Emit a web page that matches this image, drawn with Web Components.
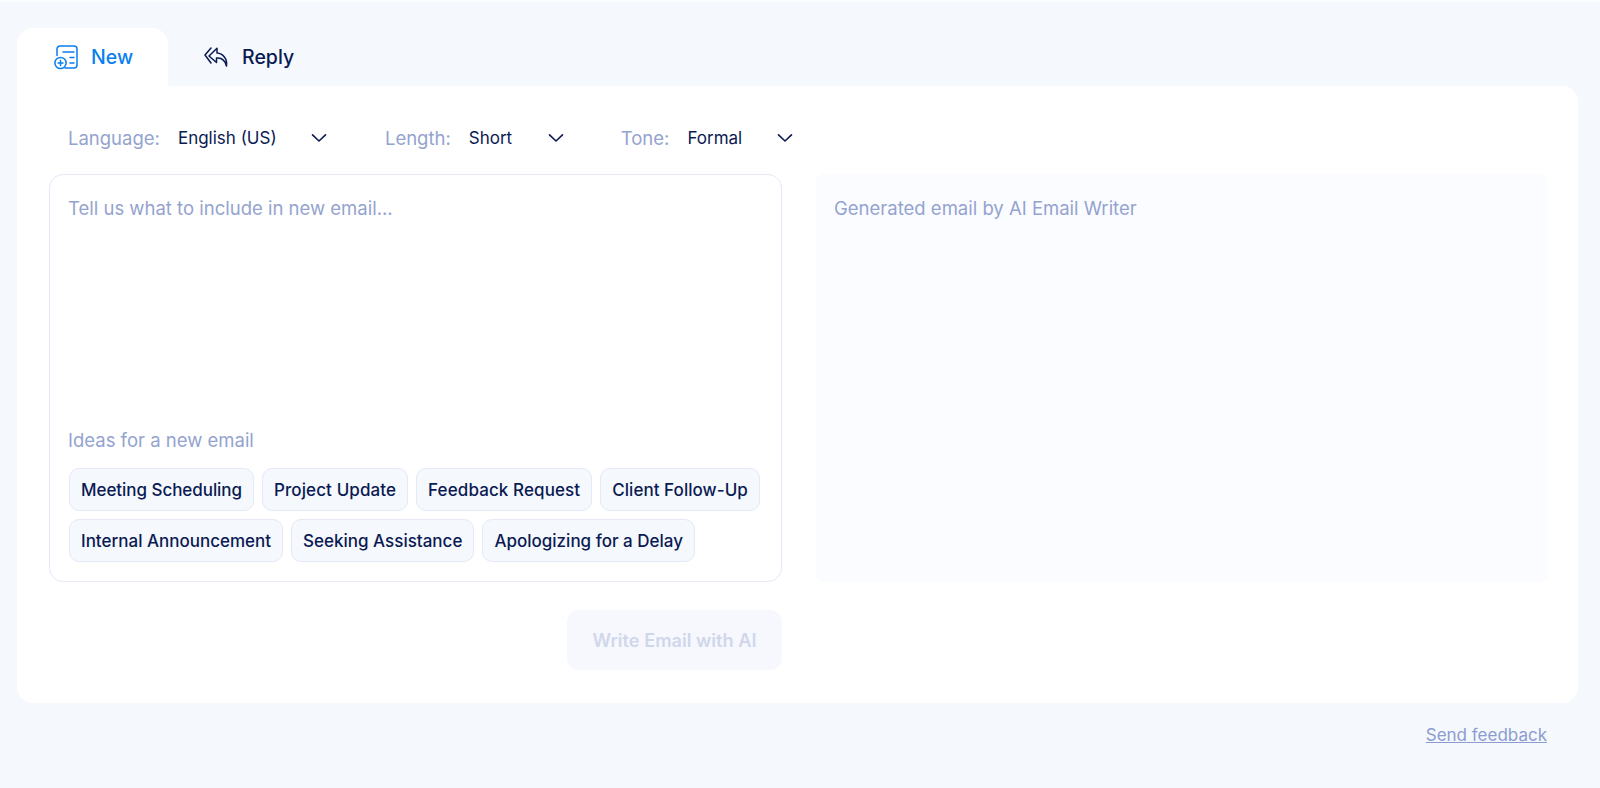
<!DOCTYPE html>
<html lang="en">

<head>
  <meta charset="UTF-8">
  <title>AI Email Writer</title>
  <style>
    html, body { margin: 0; height: 100%; }
    body {
      background: #f5f8fd;
      font-family: Inter, "Liberation Sans", sans-serif;
      color: #0a1a52;
    }
  </style>
  <script>
    class TabItem extends HTMLElement {
      constructor() {
        super();
        this.attachShadow({ mode: 'open' });
        this.shadowRoot.innerHTML = `
          <style>
            :host {
              display: flex;
              align-items: center;
              gap: 13px;
              height: 58px;
              box-sizing: border-box;
              padding: 0 35px 0 36px;
              border-radius: 16px 16px 0 0;
              font-size: 19.5px;
              font-weight: 500;
              color: #0a1a52;
            }
            :host([active]) { background: #fff; color: #0a7fee; }
            ::slotted(svg) { display: block; flex: none; }
          </style>
          <slot name="icon"></slot>
          <slot></slot>
        `;
      }
    }

    class OptionSelect extends HTMLElement {
      constructor() {
        super();
        this.attachShadow({ mode: 'open' });
        this.shadowRoot.innerHTML = `
          <style>
            :host {
              display: flex;
              align-items: center;
              font-size: 17px;
            }
            .label { color: #94a3cf; font-size: 18.5px; margin-right: 18px; }
            .value { width: var(--value-width, 100px); color: #0a1a52; }
            svg { display: block; }
          </style>
          <span class="label"></span>
          <span class="value"></span>
          <svg width="16" height="16" viewBox="0 0 16 16" fill="none" stroke="#0a1a52" stroke-width="1.6" stroke-linecap="round" stroke-linejoin="round"><path d="M1.5 4.8 8 11l6.5-6.2"/></svg>
        `;
      }

      connectedCallback() {
        this.shadowRoot.querySelector('.label').textContent = this.getAttribute('label');
        this.shadowRoot.querySelector('.value').textContent = this.getAttribute('value');
      }
    }

    class IdeaChip extends HTMLElement {
      constructor() {
        super();
        this.attachShadow({ mode: 'open' });
        this.shadowRoot.innerHTML = `
          <style>
            :host {
              display: flex;
              align-items: center;
              height: 43px;
              box-sizing: border-box;
              padding: 0 11px;
              background: #f5f8fd;
              border: 1px solid #e5e9f7;
              border-radius: 10px;
              font-size: 17px;
              font-weight: 500;
              color: #0a1a52;
              white-space: nowrap;
            }
          </style>
          <slot></slot>
        `;
      }
    }

    class PromptBox extends HTMLElement {
      constructor() {
        super();
        this.attachShadow({ mode: 'open' });
        this.shadowRoot.innerHTML = `
          <style>
            :host {
              display: flex;
              flex-direction: column;
              height: 408px;
              box-sizing: border-box;
              padding: 20px 10px 19px 19px;
              background: #fff;
              border: 1px solid #e5e9f7;
              border-radius: 14px;
              font-size: 18.5px;
              color: #94a3cf;
            }
            .placeholder { line-height: 26px; flex: 1; margin-left: -1px; }
            .ideas-title { line-height: 26px; margin: 0 0 15px -1px; }
            .chips { display: flex; flex-wrap: wrap; gap: 8px; }
          </style>
          <div class="placeholder">Tell us what to include in new email...</div>
          <div class="ideas-title">Ideas for a new email</div>
          <div class="chips"><slot></slot></div>
        `;
      }
    }

    class ResultBox extends HTMLElement {
      constructor() {
        super();
        this.attachShadow({ mode: 'open' });
        this.shadowRoot.innerHTML = `
          <style>
            :host {
              display: block;
              height: 408px;
              box-sizing: border-box;
              padding: 21px 18px;
              background: #fbfcff;
              border-radius: 8px;
              font-size: 18.5px;
              line-height: 26px;
              color: #94a3cf;
            }
          </style>
          <slot></slot>
        `;
      }
    }

    class WriteButton extends HTMLElement {
      constructor() {
        super();
        this.attachShadow({ mode: 'open' });
        this.shadowRoot.innerHTML = `
          <style>
            :host {
              display: flex;
              align-items: center;
              justify-content: center;
              width: 215px;
              height: 60px;
              background: #f6f8fe;
              border-radius: 12px;
              font-size: 18.2px;
              font-weight: 600;
              color: #d0d7ea;
            }
          </style>
          <slot></slot>
        `;
      }
    }

    class WriterCard extends HTMLElement {
      constructor() {
        super();
        this.attachShadow({ mode: 'open' });
        this.shadowRoot.innerHTML = `
          <style>
            :host {
              display: block;
              height: 617px;
              box-sizing: border-box;
              padding: 0 30px 0 32px;
              background: #fff;
              border-radius: 0 16px 16px 16px;
            }
            .options {
              display: flex;
              align-items: center;
              gap: 58px;
              height: 72px;
              padding: 16px 0 0 19px;
            }
            .panes { display: grid; grid-template-columns: 733px 732px; column-gap: 34px; }
            .actions { display: flex; justify-content: flex-end; width: 733px; margin-top: 28px; }
          </style>
          <div class="options"><slot name="options"></slot></div>
          <div class="panes"><slot name="prompt"></slot><slot name="result"></slot></div>
          <div class="actions"><slot name="action"></slot></div>
        `;
      }
    }

    class WriterPage extends HTMLElement {
      constructor() {
        super();
        this.attachShadow({ mode: 'open' });
        this.shadowRoot.innerHTML = `
          <style>
            :host {
              display: block;
              height: 788px;
              box-sizing: border-box;
              padding: 26px 22px 0 17px;
              border-top: 2px solid #fbfcfe;
            }
            .tabs { display: flex; }
            .footer { display: flex; justify-content: flex-end; padding: 21px 31px 0 0; }
            a {
              font-size: 17px;
              line-height: 22px;
              color: #8c9cd0;
              text-decoration: underline;
            }
          </style>
          <div class="tabs"><slot name="tabs"></slot></div>
          <slot></slot>
          <div class="footer"><a href="#">Send feedback</a></div>
        `;
      }
    }

    customElements.define('tab-item', TabItem);
    customElements.define('option-select', OptionSelect);
    customElements.define('idea-chip', IdeaChip);
    customElements.define('prompt-box', PromptBox);
    customElements.define('result-box', ResultBox);
    customElements.define('write-button', WriteButton);
    customElements.define('writer-card', WriterCard);
    customElements.define('writer-page', WriterPage);
  </script>
</head>

<body>
  <writer-page>
    <tab-item slot="tabs" active>
      <svg slot="icon" width="25" height="25" viewBox="0 0 25 25" fill="none" stroke="#0a7fee" stroke-width="1.5" stroke-linecap="round" stroke-linejoin="round">
        <path d="M4 10.500V4A3 3 0 0 1 7 1h14a3 3 0 0 1 3 3v16a3 3 0 0 1-3 3h-9"/>
        <path d="M10 7h11M17 12.500h4M17 18h4"/>
        <circle cx="7.500" cy="18" r="5.600"/>
        <path d="M7.500 15.500v5M5 18h5"/>
      </svg>
      New
    </tab-item>
    <tab-item slot="tabs">
      <svg slot="icon" width="25" height="21" viewBox="0 0 25 21" fill="none" stroke="#0a1a52" stroke-width="1.5" stroke-linecap="round" stroke-linejoin="round">
        <path d="M7 1 1 8l6 8"/>
        <path d="M13 1.300 5 9l7.500 6.500V11c4.500-.5 8.500 2 10 8 1-7-3.500-12.500-9.500-13z"/>
      </svg>
      Reply
    </tab-item>

    <writer-card>
      <option-select slot="options" label="Language:" value="English (US)" style="--value-width: 133px"></option-select>
      <option-select slot="options" label="Length:" value="Short" style="--value-width: 79px; margin-right: -1px"></option-select>
      <option-select slot="options" label="Tone:" value="Formal" style="--value-width: 90px"></option-select>

      <prompt-box slot="prompt">
        <idea-chip style="letter-spacing: -.05px">Meeting Scheduling</idea-chip>
        <idea-chip style="letter-spacing: .1px">Project Update</idea-chip>
        <idea-chip style="letter-spacing: .1px">Feedback Request</idea-chip>
        <idea-chip style="letter-spacing: .05px">Client Follow-Up</idea-chip>
        <idea-chip>Internal Announcement</idea-chip>
        <idea-chip>Seeking Assistance</idea-chip>
        <idea-chip>Apologizing for a Delay</idea-chip>
      </prompt-box>

      <result-box slot="result">Generated email by AI Email Writer</result-box>

      <write-button slot="action">Write Email with AI</write-button>
    </writer-card>
  </writer-page>
</body>

</html>
